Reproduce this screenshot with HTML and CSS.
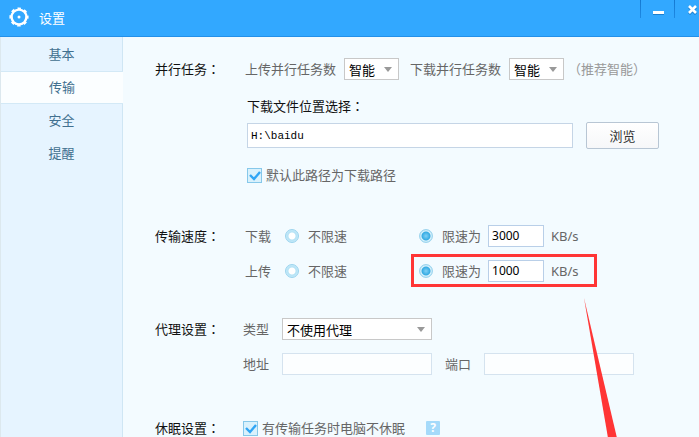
FILE: index.html
```html
<!DOCTYPE html>
<html lang="zh-CN">
<head>
  <meta charset="UTF-8" />
  <meta name="viewport" content="width=device-width, initial-scale=1.0"/>
  <title>设置</title>
  <link rel="stylesheet" href="styles.css">
</head>
<body>
  <header class="titlebar">
    <svg class="gear" viewBox="0 0 20 20" aria-hidden="true">
      <circle cx="10" cy="10" r="7.4" fill="none" stroke="#fff" stroke-width="2.4"/>
      <circle cx="10" cy="10" r="8.6" fill="none" stroke="#fff" stroke-width="2" stroke-dasharray="3.4 3.354" stroke-dashoffset="1.7"/>
      <circle cx="10" cy="10" r="1.5" fill="#fff"/>
    </svg>
    <h1>设置</h1>
    <div class="window-buttons">
      <button type="button" aria-label="最小化">
        <svg width="12" height="10" viewBox="0 0 12 10"><path d="M0 8h11" stroke="#1b7fcf" stroke-width="4"/><path d="M0 7.5h11" stroke="#fff" stroke-width="3"/></svg>
      </button>
      <button type="button" aria-label="关闭">
        <svg width="12" height="10" viewBox="0 0 12 10"><path d="M2 2l7 7M9 2l-7 7" stroke="#1b7fcf" stroke-width="3"/><path d="M2 1l7 7M9 1l-7 7" stroke="#fff" stroke-width="2.6"/></svg>
      </button>
    </div>
  </header>

  <div class="body">
    <nav class="sidebar">
      <a href="#basic">基本</a>
      <a href="#transfer" class="active">传输</a>
      <a href="#safe">安全</a>
      <a href="#remind">提醒</a>
    </nav>

    <form class="settings">
      <section class="group">
        <h2>并行任务<span class="colon" lang="zh-TW">：</span></h2>
        <div class="rows">
          <div class="row tasks">
            <label for="upTasks">上传并行任务数</label>
            <select id="upTasks" class="small"><option>智能</option></select>
            <label for="downTasks" class="second">下载并行任务数</label>
            <select id="downTasks" class="small"><option>智能</option></select>
            <span class="note">（推荐智能）</span>
          </div>
          <div class="path">
            <label for="path" class="path-title">下载文件位置选择<span class="colon" lang="zh-TW">：</span></label>
            <div class="row path-row">
              <input type="text" id="path" value="H:\baidu">
              <button type="button" class="browse">浏览</button>
            </div>
            <label class="row check"><input type="checkbox" checked>默认此路径为下载路径</label>
          </div>
        </div>
      </section>

      <section class="group speed">
        <h2>传输速度<span class="colon" lang="zh-TW">：</span></h2>
        <div class="rows">
          <div class="row">
            <span class="name">下载</span>
            <label class="radio free"><input type="radio" name="down">不限速</label>
            <label class="radio"><input type="radio" name="down" checked>限速为</label>
            <input type="text" class="number" value="3000" aria-label="下载限速">
            <span class="unit">KB/s</span>
          </div>
          <div class="row">
            <span class="name">上传</span>
            <label class="radio free"><input type="radio" name="up">不限速</label>
            <div class="row limit">
              <label class="radio"><input type="radio" name="up" checked>限速为</label>
              <input type="text" class="number" value="1000" aria-label="上传限速">
              <span class="unit">KB/s</span>
              <svg class="pointer" viewBox="0 0 40 140" aria-hidden="true"><path d="M1 0L34 140H25Z" fill="#ff3535"/></svg>
            </div>
          </div>
        </div>
      </section>

      <section class="group proxy">
        <h2>代理设置<span class="colon" lang="zh-TW">：</span></h2>
        <div class="rows">
          <div class="row">
            <label for="type">类型</label>
            <select id="type" class="wide"><option>不使用代理</option></select>
          </div>
          <div class="row">
            <label for="address">地址</label>
            <input type="text" id="address" class="wide" disabled>
            <label for="port">端口</label>
            <input type="text" id="port" class="wide" disabled>
          </div>
        </div>
      </section>

      <section class="group sleep">
        <h2>休眠设置<span class="colon" lang="zh-TW">：</span></h2>
        <div class="rows">
          <div class="row">
            <label class="row check"><input type="checkbox" checked>有传输任务时电脑不休眠</label>
            <button type="button" class="help" aria-label="帮助">?</button>
          </div>
        </div>
      </section>
    </form>
  </div>
</body>
</html>
```

FILE: styles.css
```css
* {
  margin: 0;
  padding: 0;
  box-sizing: border-box;
}

html, body {
  height: 100%;
  overflow: hidden;
}

body {
  display: flex;
  flex-direction: column;
  font: 13px/22px "Noto Sans", "Noto Sans CJK SC", sans-serif;
  color: #666;
  background: #f3fbff;
}

input, select, button {
  font: inherit;
}

button {
  cursor: pointer;
}

.titlebar {
  display: flex;
  flex: none;
  height: 37px;
  padding-left: 9px;
  background: #32a8ff;
  border-bottom: 1px solid #2490e8;
}

.gear {
  width: 20px;
  height: 20px;
  margin-top: 7px;
}

.titlebar h1 {
  margin-left: 10px;
  font-size: 13px;
  font-weight: normal;
  line-height: 36px;
  color: #fff;
}

.window-buttons {
  display: flex;
  height: 18px;
  margin-left: auto;
}

.window-buttons button {
  width: 34px;
  padding-left: 12px;
  background: none;
  border: 0;
  border-left: 1px solid;
  border-image: linear-gradient(#1478d0, #1f8ae4) 1;
}

.window-buttons button:last-child {
  width: 25px;
}

.window-buttons svg {
  display: block;
  margin-top: 2px;
}

.body {
  display: flex;
  flex: 1;
  min-height: 0;
}

.sidebar {
  flex: none;
  width: 123px;
  padding-top: 1px;
  background: #e6f4ff;
  border-left: 1px solid #dce8ee;
  border-right: 1px solid #cfe6f4;
}

.sidebar a {
  display: block;
  height: 33px;
  line-height: 33px;
  text-align: center;
  color: #41708f;
  text-decoration: none;
}

.sidebar .active {
  margin-right: -1px;
  background: #fbfeff;
  border-top: 1px solid #d3e9f6;
  border-bottom: 1px solid #d3e9f6;
  line-height: 31px;
}

.settings {
  flex: 1;
  padding: 21px 0 0 32px;
}

.group {
  display: flex;
}

.group h2 {
  flex: none;
  width: 90px;
  font-size: 13px;
  font-weight: normal;
  color: #111;
}

.colon {
  font-family: "Noto Sans CJK TC", sans-serif;
}

.row {
  display: flex;
  align-items: center;
  height: 22px;
}

.tasks select {
  margin-left: 8px;
}

.tasks .second {
  margin-left: 11px;
}

.note {
  margin-left: 4px;
  color: #999;
}

input[type="text"] {
  height: 22px;
  padding: 0 3px;
  color: #000;
  background: #fff;
  border: 1px solid #b9cfe8;
}

input[type="text"]:disabled {
  background: #fcfeff;
  border-color: #d5e3ef;
}

select {
  height: 22px;
  padding: 0 4px;
  color: #000;
  border: 1px solid #c8c8c8;
  appearance: none;
  background: #fff url("data:image/svg+xml,%3Csvg xmlns='http://www.w3.org/2000/svg' width='8' height='5'%3E%3Cpath d='M0 0h8L4 5z' fill='%23999'/%3E%3C/svg%3E") no-repeat right 6px center;
}

.small {
  width: 55px;
}

.wide {
  width: 150px;
}

.path {
  padding: 15px 0 0 2px;
}

.path-title {
  display: block;
  color: #111;
}

.path-row {
  height: 27px;
  margin: 5px 0 15px;
}

.path-row input[type="text"] {
  width: 326px;
  height: 25px;
  font: 11px "Liberation Mono", monospace;
  border-color: #c5d5e6;
}

.browse {
  width: 73px;
  height: 27px;
  margin-left: 13px;
  color: #333;
  background: linear-gradient(#fff, #f6f7f9);
  border: 1px solid #b8c6d4;
  border-radius: 2px;
}

.check input {
  width: 15px;
  height: 15px;
  margin-right: 4px;
  appearance: none;
  border: 1px solid #86c8ea;
  background: #d9f1fc;
}

.check input:checked {
  background: #d9f1fc url("data:image/svg+xml,%3Csvg xmlns='http://www.w3.org/2000/svg' viewBox='0 0 13 13'%3E%3Cpath d='M2 6l4 4L12 3' fill='none' stroke='%232fa5f5' stroke-width='2.4'/%3E%3C/svg%3E") center / 13px 13px;
}

.speed {
  margin-top: 39px;
}

.speed .rows,
.proxy .rows {
  display: grid;
  gap: 13px;
}

.name {
  width: 40px;
}

.radio {
  display: flex;
  align-items: center;
}

.radio input {
  width: 14px;
  height: 14px;
  margin-right: 9px;
  appearance: none;
  border: 1px solid #9bd4ee;
  border-radius: 50%;
  background: radial-gradient(circle, #fff 3px, #b4e2f5 4px, #c5eafa 6px);
}

.radio input:checked {
  background: radial-gradient(circle, #7fd0f5 0, #35abe3 4px, #dff4fd 5px, #b4e2f5 6px);
}

.free {
  width: 134px;
}

.number {
  width: 56px;
  margin: 0 7px;
}

.speed .number {
  font-size: 12px;
}

/* red frame round the upload limit */
.limit {
  position: relative;
}

.limit::before {
  content: "";
  position: absolute;
  inset: -6px -18px -5px -8px;
  border: 3px solid #ff3535;
}

.pointer {
  position: absolute;
  top: 38px;
  left: 164px;
  width: 40px;
  height: 140px;
}

.proxy {
  margin-top: 36px;
}

.proxy .rows,
.sleep .rows {
  margin-left: -2px;
}

.proxy .wide {
  margin: 0 13px;
}

.sleep {
  margin-top: 42px;
}

.help {
  width: 14px;
  height: 14px;
  margin-left: 21px;
  font-size: 12px;
  font-weight: bold;
  line-height: 14px;
  color: #fff;
  background: #a5dafa;
  border: 0;
  border-radius: 1px;
}
```
